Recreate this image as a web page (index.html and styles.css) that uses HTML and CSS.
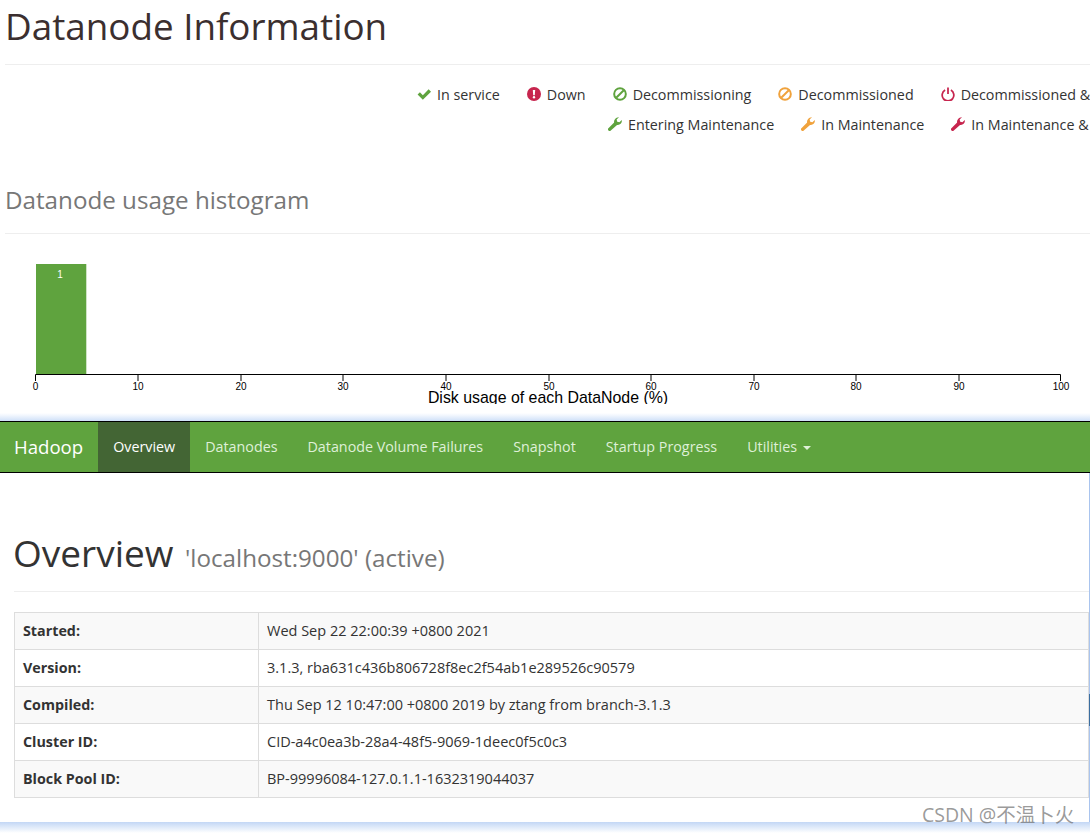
FILE: index.html
```html
<!DOCTYPE html>
<html lang="en">
<head>
    <meta charset="UTF-8">
    <title>Namenode information</title>
    <link rel="stylesheet" href="styles.css">
</head>
<body>
<svg class="icon-defs" width="0" height="0">
    <symbol id="i-wrench" viewBox="0 0 24 24">
        <path d="M23.600 5.200c.5 2.300-.1 4.800-1.900 6.500-1.700 1.700-4 2.300-6.200 1.800L4.300 23.700c-.8.8-2.100.8-2.900 0l-1.100-1.100c-.8-.8-.8-2.100 0-2.900L10.500 9.500c-.5-2.200.1-4.500 1.800-6.200C14 1.600 16.500-.1 18.800.400L14.800 4.400l1 3.800 3.800 1z"/>
    </symbol>
    <symbol id="i-ban" viewBox="0 0 24 24">
        <circle cx="12" cy="12" r="10" fill="none" stroke="currentColor" stroke-width="3.400"/>
        <path d="M5.500 18.500L18.500 5.500" fill="none" stroke="currentColor" stroke-width="3.400"/>
    </symbol>
</svg>

<div class="top-shot">
    <h1 class="page-title">Datanode Information</h1>
    <div class="legend">
        <div class="legend-row legend-row-1">
            <span class="legend-item">
                <svg class="icon c-green" viewBox="0 0 24 24"><path d="M1 13l4-4 5 5L20 4l4 4-14 14z"/></svg>
                In service
            </span>
            <span class="legend-item">
                <svg class="icon c-red" viewBox="0 0 24 24"><circle cx="12" cy="12" r="12"/><path d="M10 5h4l-.6 9h-2.800z" fill="#fff"/><circle cx="12" cy="17.500" r="2" fill="#fff"/></svg>
                Down
            </span>
            <span class="legend-item">
                <svg class="icon c-green"><use href="#i-ban"/></svg>
                Decommissioning
            </span>
            <span class="legend-item">
                <svg class="icon c-orange"><use href="#i-ban"/></svg>
                Decommissioned
            </span>
            <span class="legend-item">
                <svg class="icon c-red" viewBox="0 0 24 24"><path d="M7 5.200a10 10 0 1 0 10 0" fill="none" stroke="currentColor" stroke-width="3"/><path d="M12 1v11" fill="none" stroke="currentColor" stroke-width="3"/></svg>
                Decommissioned &amp; dead
            </span>
        </div>
        <div class="legend-row legend-row-2">
            <span class="legend-item">
                <svg class="icon c-green"><use href="#i-wrench"/></svg>
                Entering Maintenance
            </span>
            <span class="legend-item">
                <svg class="icon c-orange"><use href="#i-wrench"/></svg>
                In Maintenance
            </span>
            <span class="legend-item">
                <svg class="icon c-red"><use href="#i-wrench"/></svg>
                In Maintenance &amp; dead
            </span>
        </div>
    </div>

    <h2 class="section-title">Datanode usage histogram</h2>

    <svg class="histogram" width="1090" height="149" viewBox="0 255 1090 149">
        <rect x="36" y="264" width="50" height="110" fill="#5fa33e"/>
        <rect x="86" y="264" width="1" height="110" fill="#cfe3c5"/>
        <text class="bar-label" x="60" y="278">1</text>
        <path d="M35.500 381V374.500H1060.500V381" fill="none" stroke="#000"/>
        <path d="M138 375v6M241 375v6M343 375v6M446 375v6M549 375v6M651 375v6M754 375v6M856 375v6M959 375v6" stroke="#000"/>
        <text class="tick" x="35.500" y="390">0</text>
        <text class="tick" x="138" y="390">10</text>
        <text class="tick" x="241" y="390">20</text>
        <text class="tick" x="343" y="390">30</text>
        <text class="tick" x="446" y="390">40</text>
        <text class="tick" x="549" y="390">50</text>
        <text class="tick" x="651" y="390">60</text>
        <text class="tick" x="754" y="390">70</text>
        <text class="tick" x="856" y="390">80</text>
        <text class="tick" x="959" y="390">90</text>
        <text class="tick" x="1061" y="390">100</text>
        <text class="axis-label" x="548" y="403">Disk usage of each DataNode (%)</text>
    </svg>
</div>

<div class="bottom-shot">
    <nav class="navbar">
        <a class="brand">Hadoop</a>
        <a class="nav-link active">Overview</a>
        <a class="nav-link">Datanodes</a>
        <a class="nav-link">Datanode Volume Failures</a>
        <a class="nav-link">Snapshot</a>
        <a class="nav-link">Startup Progress</a>
        <a class="nav-link">Utilities <span class="caret"></span></a>
    </nav>

    <div class="page-header">
        <h1 class="overview-title">Overview <small>'localhost:9000' (active)</small></h1>
    </div>

    <table class="info-table">
        <tr><th>Started:</th><td>Wed Sep 22 22:00:39 +0800 2021</td></tr>
        <tr><th>Version:</th><td>3.1.3, rba631c436b806728f8ec2f54ab1e289526c90579</td></tr>
        <tr><th>Compiled:</th><td>Thu Sep 12 10:47:00 +0800 2019 by ztang from branch-3.1.3</td></tr>
        <tr><th>Cluster ID:</th><td>CID-a4c0ea3b-28a4-48f5-9069-1deec0f5c0c3</td></tr>
        <tr><th>Block Pool ID:</th><td>BP-99996084-127.0.1.1-1632319044037</td></tr>
    </table>

    <div class="scroll-mark"></div>
    <div class="bottom-glow"></div>
    <div class="watermark">CSDN @不温卜火</div>
</div>
</body>
</html>
```

FILE: styles.css
```css
html, body {
    height: 833px;
    overflow: hidden;
}
body {
    margin: 0;
    padding: 0;
    background: #fff;
    color: #333;
    font-family: "Open Sans", "Noto Sans CJK SC", sans-serif;
    font-size: 14.500px;
}
.icon-defs {
    display: block;
    height: 0;
}
.top-shot {
    height: 421px;
    overflow: hidden;
    background: linear-gradient(to bottom, #fff 413px, #f4f8fe 415px, #cfe0f8 421px);
}
.page-title {
    margin: 0 0 0 5px;
    height: 64px;
    border-bottom: 1px solid #eee;
    font-size: 36.800px;
    font-weight: 400;
    line-height: 52px;
    color: #3b2f2f;
    white-space: nowrap;
}
.legend {
    padding-top: 14px;
    height: 60px;
    font-size: 14.300px;
}
.legend-row {
    display: flex;
    height: 30px;
    align-items: center;
    white-space: nowrap;
}
.legend-row-1 {
    padding-left: 417px;
}
.legend-row-2 {
    padding-left: 608px;
}
.legend-item {
    display: flex;
    align-items: center;
    flex-shrink: 0;
    margin-right: 27px;
}
.icon {
    width: 14px;
    height: 14px;
    margin-right: 6px;
    fill: currentColor;
}
.c-green {
    color: #5fa33e;
}
.c-orange {
    color: #f0a23c;
}
.c-red {
    color: #c7254e;
}
.section-title {
    margin: 43px 0 0 5px;
    height: 51px;
    border-bottom: 1px solid #eee;
    font-size: 24.200px;
    font-weight: 400;
    line-height: 36px;
    color: #777;
}
.histogram {
    display: block;
    margin-top: 21px;
}
.histogram text {
    font-family: "Liberation Sans", Arial, sans-serif;
    text-anchor: middle;
}
.bar-label {
    font-size: 10px;
    fill: #fff;
}
.tick {
    font-size: 10px;
    fill: #000;
}
.axis-label {
    font-size: 15.900px;
    fill: #000;
}
.bottom-shot {
    position: relative;
    height: 412px;
    border-right: 1px solid #a9c4ee;
    box-sizing: border-box;
    background: #fff;
}
.navbar {
    display: flex;
    height: 52px;
    box-sizing: border-box;
    border-top: 1px solid #000;
    border-bottom: 1px solid #000;
    margin-right: -1px;
    background: #5fa33e;
    font-size: 14.300px;
}
.brand {
    padding: 0 15px 0 14px;
    font-size: 18.600px;
    line-height: 50px;
    color: #fff;
}
.nav-link {
    padding: 0 15px;
    line-height: 50px;
    color: #dff0d8;
}
.nav-link.active {
    background: #436534;
    color: #fff;
}
.caret {
    display: inline-block;
    width: 0;
    height: 0;
    margin-left: 2px;
    vertical-align: middle;
    border-top: 4px solid #dff0d8;
    border-left: 4px solid transparent;
    border-right: 4px solid transparent;
}
.page-header {
    margin: 0 0 0 14px;
    height: 119px;
    box-sizing: border-box;
    border-bottom: 1px solid #eee;
}
.overview-title {
    margin: 0 0 0 -1px;
    padding-top: 54px;
    font-size: 37px;
    font-weight: 400;
    line-height: 52px;
    white-space: nowrap;
}
.overview-title small {
    margin-left: 2px;
    font-size: 24.200px;
    color: #777;
}
.info-table {
    width: 1075px;
    margin: 20px 0 0 14px;
    border-collapse: collapse;
    table-layout: fixed;
}
.info-table th, .info-table td {
    height: 37px;
    padding: 0 8px 2px;
    border: 1px solid #ddd;
    text-align: left;
    box-sizing: border-box;
}
.info-table th {
    width: 244px;
    font-size: 14.300px;
    font-weight: 700;
}
.info-table tr:nth-child(odd) {
    background: #f9f9f9;
}
.scroll-mark {
    position: absolute;
    right: -1px;
    top: 273px;
    width: 1px;
    height: 32px;
    background: #3b6ea0;
}
.bottom-glow {
    position: absolute;
    left: 0;
    right: -1px;
    top: 401px;
    height: 11px;
    background: linear-gradient(to bottom, #c3d7f5, #eef4fc 8px, #fff);
}
.watermark {
    position: absolute;
    left: 922px;
    top: 378px;
    font-size: 19.500px;
    color: rgba(110, 110, 110, 0.7);
    white-space: nowrap;
}
```
